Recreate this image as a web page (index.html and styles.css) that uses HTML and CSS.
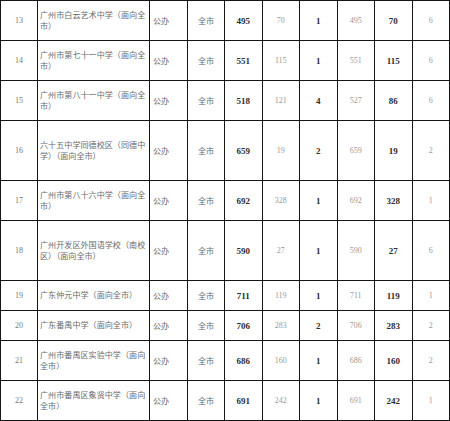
FILE: index.html
```html
<!DOCTYPE html>
<html>
<head>
<meta charset="utf-8">
<link rel="stylesheet" href="styles.css">
</head>
<body>
<table class="grid">
  <colgroup>
    <col class="c-no"><col class="c-name"><col class="c-type"><col class="c-area">
    <col class="c-n"><col class="c-n"><col class="c-n"><col class="c-n"><col class="c-n"><col class="c-n">
  </colgroup>
  <tr class="h40"><td class="no">13</td><td class="name">广州市白云艺术中学（面向全<br>市）</td><td class="type">公办</td><td class="area">全市</td><td class="b">495</td><td class="l">70</td><td class="b">1</td><td class="l">495</td><td class="b">70</td><td class="l">6</td></tr>
  <tr class="h40"><td class="no">14</td><td class="name">广州市第七十一中学（面向全<br>市）</td><td class="type">公办</td><td class="area">全市</td><td class="b">551</td><td class="l">115</td><td class="b">1</td><td class="l">551</td><td class="b">115</td><td class="l">6</td></tr>
  <tr class="h40"><td class="no">15</td><td class="name">广州市第八十一中学（面向全<br>市）</td><td class="type">公办</td><td class="area">全市</td><td class="b">518</td><td class="l">121</td><td class="b">4</td><td class="l">527</td><td class="b">86</td><td class="l">6</td></tr>
  <tr class="h60"><td class="no">16</td><td class="name">六十五中学同德校区（同德中<br>学）（面向全市）</td><td class="type">公办</td><td class="area">全市</td><td class="b">659</td><td class="l">19</td><td class="b">2</td><td class="l">659</td><td class="b">19</td><td class="l">2</td></tr>
  <tr class="h40"><td class="no">17</td><td class="name">广州市第八十六中学（面向全<br>市）</td><td class="type">公办</td><td class="area">全市</td><td class="b">692</td><td class="l">328</td><td class="b">1</td><td class="l">692</td><td class="b">328</td><td class="l">1</td></tr>
  <tr class="h60"><td class="no">18</td><td class="name">广州开发区外国语学校（南校<br>区）（面向全市）</td><td class="type">公办</td><td class="area">全市</td><td class="b">590</td><td class="l">27</td><td class="b">1</td><td class="l">590</td><td class="b">27</td><td class="l">6</td></tr>
  <tr class="h30"><td class="no">19</td><td class="name">广东仲元中学（面向全市）</td><td class="type">公办</td><td class="area">全市</td><td class="b">711</td><td class="l">119</td><td class="b">1</td><td class="l">711</td><td class="b">119</td><td class="l">1</td></tr>
  <tr class="h30"><td class="no">20</td><td class="name">广东番禺中学（面向全市）</td><td class="type">公办</td><td class="area">全市</td><td class="b">706</td><td class="l">283</td><td class="b">2</td><td class="l">706</td><td class="b">283</td><td class="l">2</td></tr>
  <tr class="h40"><td class="no">21</td><td class="name">广州市番禺区实验中学（面向<br>全市）</td><td class="type">公办</td><td class="area">全市</td><td class="b">686</td><td class="l">160</td><td class="b">1</td><td class="l">686</td><td class="b">160</td><td class="l">2</td></tr>
  <tr class="h40"><td class="no">22</td><td class="name">广州市番禺区象贤中学（面向<br>全市）</td><td class="type">公办</td><td class="area">全市</td><td class="b">691</td><td class="l">242</td><td class="b">1</td><td class="l">691</td><td class="b">242</td><td class="l">1</td></tr>
</table>
</body>
</html>
```

FILE: styles.css
```css
html, body {
  margin: 0;
  padding: 0;
  background: #ffffff;
}

.grid {
  border-collapse: collapse;
  table-layout: fixed;
  width: 449px;
  font-family: "Noto Sans CJK SC", "Noto Sans", sans-serif;
}

.c-no { width: 37px; }
.c-name { width: 112px; }
.c-type { width: 38px; }
.c-area { width: 37px; }
.c-n { width: 37.5px; }

.grid td {
  border: 1px solid #151515;
  padding: 0;
  text-align: center;
  vertical-align: middle;
  overflow: hidden;
}

.h40 { height: 40px; }
.h60 { height: 60px; }
.h30 { height: 30px; }

.no {
  font-family: "Liberation Serif", "DejaVu Serif", serif;
  font-size: 8px;
  color: #777;
}

.name {
  text-align: left !important;
  padding-left: 2px !important;
  font-size: 8.1px;
  line-height: 10.5px;
  color: #6a6a6a;
  white-space: nowrap;
}

.type {
  text-align: left !important;
  padding-left: 3px !important;
  font-size: 8.1px;
  color: #6a6a6a;
}

.area {
  font-size: 8.1px;
  color: #6a6a6a;
}

.b {
  font-family: "Liberation Serif", "DejaVu Serif", serif;
  font-weight: bold;
  font-size: 9px;
  color: #2e2e2e;
}

.l {
  font-family: "Liberation Serif", "DejaVu Serif", serif;
  font-size: 8px;
  color: #999;
}
```
